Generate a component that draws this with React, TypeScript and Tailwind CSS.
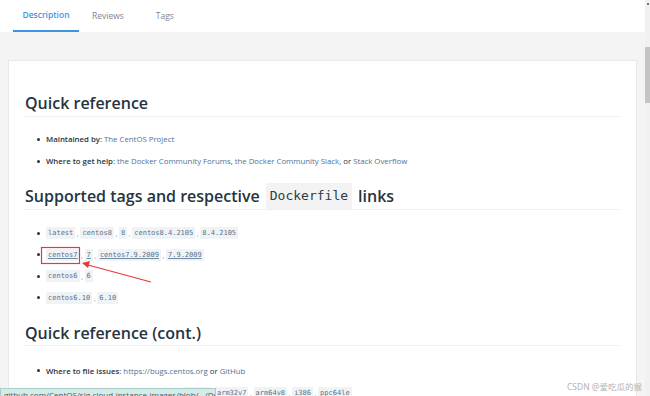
import React from "react";

// Tag rows under "Supported tags"
const tagRows = [
  { tags: ["latest", "centos8", "8", "centos8.4.2105", "8.4.2105"], underline: false },
  { tags: ["centos7", "7", "centos7.9.2009", "7.9.2009"], underline: true },
  { tags: ["centos6", "6"], underline: false },
  { tags: ["centos6.10", "6.10"], underline: false },
];

const Chip = ({ text, underline }: { text: string; underline?: boolean }) => (
  <code
    className={`bg-[#f0f3f6] px-[2px] text-[7px] leading-[12px] text-[#5b7186] ${underline ? "underline decoration-[#6d89a3]" : ""}`}
    style={{ fontFamily: '"DejaVu Sans Mono", "Liberation Mono", monospace' }}
  >
    {text}
  </code>
);

const Sep = () => <span className="px-[1.5px] text-[8px] text-[#9aa4ad]">,</span>;

const Bullet = () => <span className="ml-[12px] mr-[6px] h-[3px] w-[3px] shrink-0 rounded-full bg-[#333]" />;

const Link = ({ children }: { children: React.ReactNode }) => (
  <span className="text-[#4d7299]">{children}</span>
);

const App = () => {
  return (
    <div
      className="relative flex h-[396px] w-[650px] overflow-hidden bg-white text-[#27343e]"
      style={{ fontFamily: '"Open Sans", "Noto Sans", sans-serif' }}
    >
      <div className="flex flex-1 flex-col">
        {/* Tabs */}
        <div className="flex h-[32px] shrink-0 bg-white">
          <div className="ml-[13px] flex h-[32px] w-[66px] items-center justify-center border-b-2 border-[#3f94e0] pt-[1px] text-[8.5px] font-semibold text-[#3f94e0]">
            Description
          </div>
          <div className="ml-[13px] flex h-[32px] items-center text-[8.5px] text-[#7d8790]">Reviews</div>
          <div className="ml-[32px] flex h-[32px] items-center text-[8.5px] text-[#7d8790]">Tags</div>
        </div>

        {/* Content */}
        <div className="flex-1 bg-[#f4f4f4] px-[8px] pt-[28px]">
          <div className="h-full border border-[#e9e9e9] bg-white px-[16px] pt-[31px]">
            <h2 className="border-b border-[#eef0f2] pb-[2px] text-[16px] font-semibold leading-[22px]">
              Quick reference
            </h2>
            <ul className="mt-[16px] flex flex-col gap-[10px] text-[7.8px] leading-[12px]">
              <li className="flex items-center">
                <Bullet />
                <span>
                  <b className="font-semibold">Maintained by</b>: <Link>The CentOS Project</Link>
                </span>
              </li>
              <li className="flex items-center">
                <Bullet />
                <span>
                  <b className="font-semibold">Where to get help</b>: <Link>the Docker Community Forums</Link>,{" "}
                  <Link>the Docker Community Slack</Link>, or <Link>Stack Overflow</Link>
                </span>
              </li>
            </ul>

            <h2 className="mt-[16px] flex h-[27px] items-center border-b border-[#eef0f2] text-[16px] font-semibold">
              Supported tags and respective
              <code
                className="mx-[6px] flex h-[26px] items-center bg-[#f3f3f3] px-[4px] text-[13px] font-normal text-[#2d3b45]"
                style={{ fontFamily: '"DejaVu Sans Mono", "Liberation Mono", monospace' }}
              >
                Dockerfile
              </code>
              links
            </h2>
            <ul className="mt-[16px] flex flex-col gap-[7.5px]">
              {tagRows.map((row, i) => (
                <li key={i} className="flex h-[14px] items-center">
                  <Bullet />
                  {row.tags.map((t, j) => (
                    <React.Fragment key={t}>
                      {j > 0 && <Sep />}
                      <Chip text={t} underline={row.underline} />
                    </React.Fragment>
                  ))}
                </li>
              ))}
            </ul>

            <h2 className="mt-[17px] border-b border-[#eef0f2] pb-[1px] text-[16px] font-semibold leading-[22px]">
              Quick reference (cont.)
            </h2>
            <ul className="mt-[19px] flex flex-col gap-[10px] text-[7.8px] leading-[12px]">
              <li className="flex items-center">
                <Bullet />
                <span>
                  <b className="font-semibold">Where to file issues</b>: <Link>https://bugs.centos.org</Link> or{" "}
                  <Link>GitHub</Link>
                </span>
              </li>
              <li className="flex items-center">
                <Bullet />
                <span className="whitespace-nowrap">
                  <b className="font-semibold">Supported architectures</b>: (<Link>more info</Link>)
                </span>
                <span className="ml-[3px] flex items-center">
                  {["amd64", "arm32v7", "arm64v8", "i386", "ppc64le"].map((t, j) => (
                    <React.Fragment key={t}>
                      {j > 0 && <Sep />}
                      <Chip text={t} />
                    </React.Fragment>
                  ))}
                </span>
              </li>
            </ul>
          </div>
        </div>
      </div>

      {/* Scrollbar */}
      <div className="relative w-[5px] shrink-0 bg-[#f1f1f1]">
        <div className="ml-[2px] mt-[3px] h-[2px] w-[2px] bg-[#777]" />
        <div className="mt-[42px] h-[56px] w-[5px] bg-[#c4c4c4]" />
      </div>

      {/* Red highlight box and arrow */}
      <svg className="absolute left-0 top-0" width="650" height="396">
        <rect x="41.5" y="247.5" width="38" height="16" fill="none" stroke="#e5393a" strokeWidth="1.2" />
        <line x1="151" y1="282" x2="88" y2="265" stroke="#e5393a" strokeWidth="1.2" />
        <polygon points="82,263 90,261 88,268" fill="#e5393a" />
      </svg>

      {/* Browser status bar */}
      <div className="absolute left-0 top-[388px] h-[14px] w-[216px] overflow-hidden whitespace-nowrap border border-[#a8cdca] bg-[#d5ebe8] px-[3px] text-[8px] leading-[12px] text-[#4a5a5a]">
        github.com/CentOS/sig-cloud-instance-images/blob/.../Dockerf...
      </div>

      {/* Watermark */}
      <div
        className="absolute right-[8px] top-[381px] text-[8.5px] text-[#b4b4b4]"
        style={{ fontFamily: '"Noto Sans", "Noto Sans CJK SC", sans-serif' }}
      >
        CSDN @爱吃瓜的猴
      </div>
    </div>
  );
};

export default App;
